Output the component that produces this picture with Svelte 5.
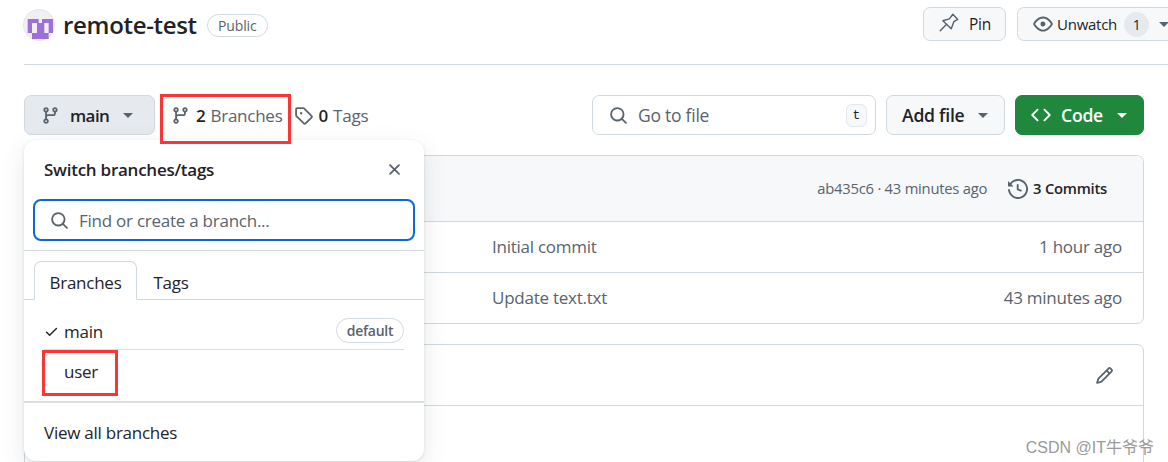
<script>
  const branch = "M9.5 3.25a2.25 2.25 0 1 1 3 2.122V6A2.5 2.5 0 0 1 10 8.5H6a1 1 0 0 0-1 1v1.128a2.251 2.251 0 1 1-1.5 0V5.372a2.25 2.25 0 1 1 1.5 0v1.836A2.493 2.493 0 0 1 6 7h4a1 1 0 0 0 1-1v-.628A2.25 2.25 0 0 1 9.5 3.25Zm-6 0a.75.75 0 1 0 1.5 0 .75.75 0 0 0-1.5 0Zm8.25-.75a.75.75 0 1 0 0 1.5.75.75 0 0 0 0-1.5ZM4.25 12a.75.75 0 1 0 0 1.5.75.75 0 0 0 0-1.5Z";
  const tag = "M1 7.775V2.75C1 1.784 1.784 1 2.75 1h5.025c.464 0 .91.184 1.238.513l6.25 6.25a1.75 1.75 0 0 1 0 2.474l-5.026 5.026a1.75 1.75 0 0 1-2.474 0l-6.25-6.25A1.752 1.752 0 0 1 1 7.775Zm1.5 0c0 .066.026.13.073.177l6.25 6.25a.25.25 0 0 0 .354 0l5.025-5.025a.25.25 0 0 0 0-.354l-6.25-6.25a.25.25 0 0 0-.177-.073H2.75a.25.25 0 0 0-.25.25ZM6 5a1 1 0 1 1 0 2 1 1 0 0 1 0-2Z";
  const search = "M10.68 11.74a6 6 0 0 1-7.922-8.982 6 6 0 0 1 8.982 7.922l3.04 3.04a.749.749 0 0 1-.326 1.275.749.749 0 0 1-.734-.215ZM11.5 7a4.499 4.499 0 1 0-8.997 0A4.499 4.499 0 0 0 11.5 7Z";
  const eye = "M8 2c1.981 0 3.671.992 4.933 2.078 1.27 1.091 2.187 2.345 2.637 3.023a1.62 1.62 0 0 1 0 1.798c-.45.678-1.367 1.932-2.637 3.023C11.67 13.008 9.981 14 8 14c-1.981 0-3.671-.992-4.933-2.078C1.797 10.83.88 9.576.43 8.898a1.62 1.62 0 0 1 0-1.798c.45-.677 1.367-1.931 2.637-3.022C4.33 2.992 6.019 2 8 2ZM1.679 7.932a.12.12 0 0 0 0 .136c.411.622 1.241 1.75 2.366 2.717C5.176 11.758 6.527 12.5 8 12.5c1.473 0 2.825-.742 3.955-1.715 1.124-.967 1.954-2.096 2.366-2.717a.12.12 0 0 0 0-.136c-.412-.621-1.242-1.75-2.366-2.717C10.824 4.242 9.473 3.5 8 3.5c-1.473 0-2.825.742-3.955 1.715-1.124.967-1.954 2.096-2.366 2.717ZM8 10a2 2 0 1 1-.001-3.999A2 2 0 0 1 8 10Z";
  const code = "m11.28 3.22 4.25 4.25a.75.75 0 0 1 0 1.06l-4.25 4.25a.749.749 0 0 1-1.275-.326.749.749 0 0 1 .215-.734L13.94 8l-3.72-3.72a.749.749 0 0 1 .326-1.275.749.749 0 0 1 .734.215Zm-6.56 0a.751.751 0 0 1 1.042.018.751.751 0 0 1 .018 1.042L2.06 8l3.72 3.72a.749.749 0 0 1-.326 1.275.749.749 0 0 1-.734-.215L.47 8.53a.75.75 0 0 1 0-1.06Z";
  const history = "m.427 1.927 1.215 1.215a8.002 8.002 0 1 1-1.6 5.685.75.75 0 1 1 1.493-.154 6.5 6.5 0 1 0 1.18-4.458l1.358 1.358A.25.25 0 0 1 3.896 6H.25A.25.25 0 0 1 0 5.75V2.104a.25.25 0 0 1 .427-.177ZM7.75 4a.75.75 0 0 1 .75.75v2.992l2.028.812a.75.75 0 0 1-.557 1.392l-2.5-1A.751.751 0 0 1 7 8.25v-3.5A.75.75 0 0 1 7.75 4Z";
  const close = "M3.72 3.72a.75.75 0 0 1 1.06 0L8 6.94l3.22-3.22a.749.749 0 0 1 1.275.326.749.749 0 0 1-.215.734L9.06 8l3.22 3.22a.749.749 0 0 1-.326 1.275.749.749 0 0 1-.734-.215L8 9.06l-3.22 3.22a.751.751 0 0 1-1.042-.018.751.751 0 0 1-.018-1.042L6.94 8 3.72 4.78a.75.75 0 0 1 0-1.06Z";
  const check = "M13.78 4.22a.75.75 0 0 1 0 1.06l-7.25 7.25a.75.75 0 0 1-1.06 0L2.22 9.28a.751.751 0 0 1 .018-1.042.751.751 0 0 1 1.042-.018L6 10.94l6.72-6.72a.75.75 0 0 1 1.06 0Z";
  const pencil = "M11.013 1.427a1.75 1.75 0 0 1 2.474 0l1.086 1.086a1.75 1.75 0 0 1 0 2.474l-8.61 8.61c-.21.21-.47.364-.756.445l-3.251.93a.75.75 0 0 1-.927-.928l.929-3.25c.081-.286.235-.547.445-.758l8.61-8.61Zm.176 4.823L9.75 4.81l-6.286 6.287a.253.253 0 0 0-.064.108l-.558 1.953 1.953-.558a.253.253 0 0 0 .108-.064Zm1.238-3.763a.25.25 0 0 0-.354 0L10.811 3.75l1.439 1.44 1.263-1.263a.25.25 0 0 0 0-.354Z";
</script>

{#snippet icon(d, cls)}
  <svg class={cls} viewBox="0 0 16 16" fill="currentColor"><path {d} /></svg>
{/snippet}

{#snippet caret(cls)}
  <svg class="caret {cls}" viewBox="0 0 12 7" fill="currentColor"><path d="M1 1h10L6 6z" /></svg>
{/snippet}

<div class="page">
  <header class="head">
    <div class="title">
      <svg class="avatar" viewBox="8 8 96 96">
        <circle cx="56" cy="56" r="47" fill="#f1eff3" stroke="#dfdde4" stroke-width="2" />
        <path d="M22 38h33v12h10V38h33v42H85v18H35V80H22z" fill="#9d70d9" />
        <path d="M35 50h15v30H35zM72 50h13v30H72z" fill="#f1eff3" />
      </svg>
      <h1>remote-test</h1>
      <span class="public">Public</span>
    </div>
    <div class="actions">
      <button class="btn pin">
        <svg class="ic-pin" viewBox="42 26 62 62" fill="none" stroke="currentColor" stroke-width="4.500" stroke-linejoin="round" stroke-linecap="round">
          <path d="M46 78 63 60M85 27l15 16-12 7-8 22-26-25 20-6z" />
        </svg>
        <span>Pin</span>
      </button>
      <button class="btn watch">
        {@render icon(eye, "ic-eye")}
        <span>Unwatch</span>
        <span class="count">1</span>
        {@render caret("watch-caret")}
      </button>
    </div>
  </header>

  <section class="bar">
    <button class="btn main-btn">
      {@render icon(branch, "ic ic-muted")}
      <strong>main</strong>
      {@render caret("grey")}
    </button>
    <div class="links">
      <a class="link link-branches">{@render icon(branch, "ic ic-muted")}<b>2</b> Branches</a>
      <a class="link link-tags">{@render icon(tag, "ic ic-muted")}<b>0</b> Tags</a>
    </div>
    <div class="spacer"></div>
    <div class="gofile">
      {@render icon(search, "ic ic-muted")}
      <span class="ph">Go to file</span>
      <kbd>t</kbd>
    </div>
    <button class="btn add">
      <strong>Add file</strong>
      {@render caret("grey")}
    </button>
    <button class="btn green">
      {@render icon(code, "ic ic-code")}
      <strong>Code</strong>
      {@render caret("white")}
    </button>
  </section>

  <section class="box files">
    <div class="files-head">
      <span class="sha">ab435c6 · 43 minutes ago</span>
      {@render icon(history, "ic ic-hist")}
      <strong class="commits">3 Commits</strong>
    </div>
    <div class="row"><span class="msg">Initial commit</span><span class="age">1 hour ago</span></div>
    <div class="row"><span class="msg">Update text.txt</span><span class="age">43 minutes ago</span></div>
  </section>

  <section class="box readme">
    <div class="readme-head">{@render icon(pencil, "ic ic-pencil")}</div>
    <div class="readme-body"></div>
  </section>

  <div class="pop">
    <div class="pop-head">
      <span>Switch branches/tags</span>
      {@render icon(close, "ic ic-close")}
    </div>
    <div class="pop-search">
      <div class="find">
        {@render icon(search, "ic ic-muted")}
        <span class="ph">Find or create a branch...</span>
      </div>
    </div>
    <div class="tabs">
      <span class="tab active">Branches</span>
      <span class="tab">Tags</span>
    </div>
    <ul class="list">
      <li class="item">
        {@render icon(check, "ic-check")}
        <span>main</span>
        <em class="default">default</em>
      </li>
      <li class="item user"><span>user</span></li>
    </ul>
    <div class="all">View all branches</div>
  </div>

  <div class="mark mark-a"></div>
  <div class="mark mark-b"></div>
  <div class="csdn">CSDN @IT牛爷爷</div>
</div>

<style>
  :global(body) {
    margin: 0;
    background: #fff;
  }
  .page {
    position: relative;
    width: 1168px;
    height: 462px;
    overflow: hidden;
    box-sizing: border-box;
    padding: 0 24px;
    font-family: "Open Sans", "Noto Sans", "Noto Sans CJK SC", sans-serif;
    font-size: 17px;
    color: #1f2328;
    letter-spacing: -0.25px;
  }
  button {
    font: inherit;
    letter-spacing: inherit;
    color: inherit;
    padding: 0;
    cursor: pointer;
  }
  strong,
  b {
    font-weight: 600;
  }
  .head {
    height: 64px;
    border-bottom: 1px solid #d1d9e0;
    display: flex;
    justify-content: space-between;
    align-items: flex-start;
    margin-right: -24px;
  }
  .title {
    display: flex;
    align-items: center;
    height: 50px;
  }
  .avatar {
    width: 32px;
    height: 32px;
    margin-left: -1px;
  }
  h1 {
    margin: 0 0 0 8px;
    font-size: 24px;
    font-weight: 600;
    letter-spacing: -0.32px;
    line-height: 32px;
  }
  .public {
    margin-left: 10px;
    height: 23px;
    width: 61px;
    box-sizing: border-box;
    border: 1px solid #d1d9e0;
    border-radius: 12px;
    font-size: 14px;
    font-weight: 500;
    color: #59636e;
    letter-spacing: -0.1px;
    display: flex;
    align-items: center;
    justify-content: center;
  }
  .actions {
    display: flex;
    gap: 11px;
    padding-top: 7px;
    margin-right: -14px;
  }
  .btn {
    display: flex;
    align-items: center;
    box-sizing: border-box;
    border: 1px solid #d1d9e0;
    background: #f6f8fa;
    border-radius: 7px;
  }
  .pin {
    width: 83px;
    height: 34px;
    font-size: 15.500px;
    font-weight: 500;
    padding-left: 15px;
    gap: 10px;
  }
  .ic-pin {
    width: 20px;
    height: 20px;
    color: #59636e;
    overflow: visible;
  }
  .watch {
    width: 165px;
    height: 34px;
    font-size: 15px;
    font-weight: 500;
    padding-left: 15px;
    flex: none;
  }
  :global(.ic-eye) {
    width: 20px;
    height: 20px;
    color: #59636e;
    margin-right: 4px;
  }
  .count {
    width: 25px;
    height: 25px;
    border-radius: 50%;
    background: #e6eaef;
    display: flex;
    align-items: center;
    justify-content: center;
    margin-left: 7px;
    font-size: 14px;
  }
  :global(.caret) {
    width: 12px;
    height: 7px;
    flex: none;
  }
  :global(.watch-caret) {
    color: #59636e;
    margin-left: 9px;
  }
  :global(.grey) {
    color: #59636e;
  }
  :global(.white) {
    color: #fff;
  }
  :global(.ic) {
    width: 19px;
    height: 19px;
    flex: none;
  }
  :global(.ic-muted) {
    color: #59636e;
  }
  .bar {
    display: flex;
    align-items: center;
    height: 40px;
    margin-top: 30px;
  }
  .main-btn {
    width: 131px;
    height: 40px;
    background: #e6eaef;
    padding-left: 16px;
    font-size: 17px;
  }
  .main-btn strong {
    margin-left: 10px;
    margin-right: 13px;
    letter-spacing: -0.6px;
  }
  .links {
    display: flex;
    margin-left: 16px;
    gap: 11px;
  }
  .link {
    display: flex;
    align-items: center;
    color: #59636e;
    font-weight: 500;
    gap: 6px;
  }
  .link-tags {
    letter-spacing: -0.2px;
  }
  .link b {
    color: #1f2328;
    margin-right: -1px;
  }
  .spacer {
    flex: 1;
  }
  .gofile {
    width: 284px;
    height: 40px;
    box-sizing: border-box;
    border: 1px solid #d1d9e0;
    border-radius: 7px;
    display: flex;
    align-items: center;
    padding: 0 8px 0 16px;
  }
  .ph {
    color: #59636e;
    margin-left: 10px;
    flex: 1;
  }
  .gofile .ph {
    font-size: 17.500px;
  }
  kbd {
    width: 21px;
    height: 23px;
    box-sizing: border-box;
    border: 1px solid #e3e8ee;
    border-radius: 6px;
    background: #f6f8fa;
    font-family: "Liberation Mono", monospace;
    font-size: 13px;
    display: flex;
    align-items: center;
    justify-content: center;
    letter-spacing: 0;
  }
  .add {
    width: 119px;
    height: 40px;
    margin-left: 10px;
    padding-left: 15px;
    gap: 13px;
    font-size: 17.600px;
  }
  .green {
    width: 129px;
    height: 40px;
    margin-left: 10px;
    background: #1f883d;
    border-color: #1f883d;
    color: #fff;
    padding-left: 15px;
    font-size: 17.600px;
  }
  :global(.ic-code) {
    width: 20px;
    height: 20px;
  }
  .green strong {
    margin-left: 10px;
    margin-right: 13px;
  }
  .box {
    border: 1px solid #d1d9e0;
    border-radius: 7px;
  }
  .files {
    margin-top: 20px;
    height: 169px;
    box-sizing: border-box;
    overflow: hidden;
  }
  .files-head {
    height: 65px;
    background: #f6f8fa;
    border-bottom: 1px solid #d1d9e0;
    display: flex;
    align-items: center;
    justify-content: flex-end;
    padding-right: 36px;
    font-size: 14.800px;
  }
  .sha {
    color: #59636e;
    margin-right: 21px;
    margin-top: -1px;
  }
  .commits {
    margin-top: -1px;
  }
  :global(.ic-hist) {
    width: 20px;
    height: 20px;
    color: #59636e;
    margin-right: 5px;
  }
  .row {
    height: 50px;
    box-sizing: border-box;
    padding-bottom: 2px;
    display: flex;
    align-items: center;
    justify-content: space-between;
    padding-left: 467px;
    padding-right: 21px;
    color: #59636e;
    font-size: 17px;
  }
  .row + .row {
    height: 51px;
    border-top: 1px solid #d1d9e0;
  }
  .readme {
    margin-top: 20px;
    height: 160px;
  }
  .readme-head {
    height: 60px;
    border-bottom: 1px solid #d1d9e0;
    display: flex;
    align-items: center;
    justify-content: flex-end;
    padding-right: 29px;
  }
  :global(.ic-pencil) {
    color: #59636e;
  }
  .pop {
    position: absolute;
    left: 24px;
    top: 140px;
    width: 400px;
    height: 321px;
    background: #fff;
    border-radius: 12px;
    box-shadow: 0 1px 3px rgba(31, 35, 40, 0.12), 0 8px 24px rgba(66, 74, 83, 0.12);
    display: flex;
    flex-direction: column;
  }
  .pop-head {
    height: 59px;
    display: flex;
    align-items: center;
    justify-content: space-between;
    padding: 0 20px;
    font-size: 17px;
    font-weight: 600;
    flex: none;
  }
  :global(.ic-close) {
    color: #59636e;
  }
  .pop-search {
    height: 51px;
    border-bottom: 1px solid #d1d9e0;
    padding: 0 9px;
    flex: none;
  }
  .find {
    height: 42px;
    box-sizing: border-box;
    border: 2px solid #0969da;
    border-radius: 8px;
    display: flex;
    align-items: center;
    padding-left: 15px;
  }
  .tabs {
    height: 48px;
    border-bottom: 1px solid #d1d9e0;
    display: flex;
    align-items: flex-end;
    padding-left: 10px;
    flex: none;
  }
  .tab {
    width: 103px;
    height: 39px;
    box-sizing: border-box;
    display: flex;
    align-items: center;
    justify-content: center;
    font-weight: 500;
    font-size: 17px;
    margin-bottom: -1px;
    padding-top: 3px;
  }
  .tab.active {
    border: 1px solid #d1d9e0;
    border-bottom-color: #fff;
    border-radius: 7px 7px 0 0;
  }
  .tab:not(.active) {
    width: 68px;
  }
  .list {
    list-style: none;
    margin: 0 20px;
    padding: 0;
    height: 101px;
    flex: none;
  }
  .item {
    display: flex;
    align-items: center;
    height: 50px;
    box-sizing: border-box;
    font-size: 17px;
  }
  .item:first-child {
    border-bottom: 1px solid #d8dee4;
    padding-top: 13px;
  }
  :global(.ic-check) {
    width: 15px;
    height: 15px;
    margin-right: 5px;
  }
  .user {
    padding-left: 20px;
    padding-bottom: 8px;
  }
  .default {
    margin-left: auto;
    margin-top: -1px;
    width: 68px;
    height: 25px;
    box-sizing: border-box;
    border: 1px solid #d1d9e0;
    border-radius: 13px;
    font-style: normal;
    font-weight: 600;
    font-size: 14px;
    color: #59636e;
    display: flex;
    align-items: center;
    justify-content: center;
  }
  .all {
    border-top: 2px solid #d8dee4;
    height: 60px;
    display: flex;
    align-items: center;
    padding-left: 20px;
    font-size: 17px;
    box-sizing: border-box;
  }
  .mark {
    position: absolute;
    border: 3px solid #f83636;
    box-sizing: border-box;
    pointer-events: none;
  }
  .mark-a {
    left: 160px;
    top: 94px;
    width: 131px;
    height: 50px;
  }
  .mark-b {
    left: 42px;
    top: 350px;
    width: 76px;
    height: 46px;
  }
  .csdn {
    position: absolute;
    right: 14px;
    top: 434px;
    font-family: "Liberation Sans", "Noto Sans CJK SC", sans-serif;
    font-size: 16px;
    letter-spacing: 0;
    color: #9a9a9a;
  }
</style>
